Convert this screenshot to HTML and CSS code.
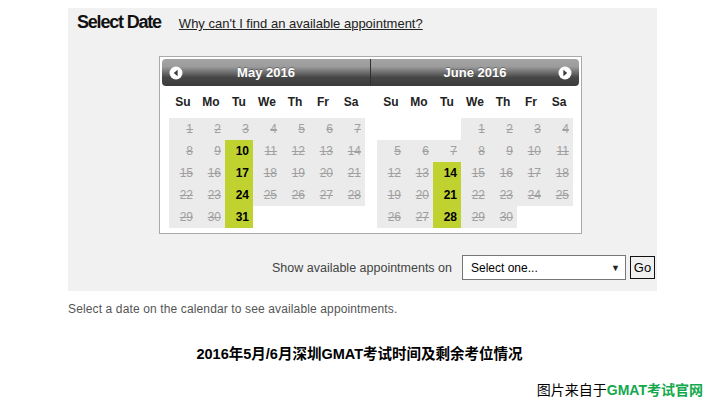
FILE: index.html
```html
<!DOCTYPE html>
<html lang="en">
<head>
    <meta charset="UTF-8">
    <title>Select Date</title>
    <link rel="stylesheet" href="styles.css">
</head>
<body>
    <div class="panel">
        <div class="panel-head">
            <h2>Select Date</h2>
            <a href="#" class="why-link">Why can't I find an available appointment?</a>
        </div>

        <!-- Calendrier deux mois -->
        <div class="calendar">
            <div class="cal-header">
                <div class="cal-title">
                    <svg class="nav-icon" width="14" height="14" viewBox="0 0 14 14"><circle cx="7" cy="7" r="6.5" fill="#fff"/><polygon points="8.6,3.8 4.8,7 8.6,10.2" fill="#3a3a3a"/></svg>
                    <span>May 2016</span>
                    <span></span>
                </div>
                <div class="cal-title second">
                    <span></span>
                    <span>June 2016</span>
                    <svg class="nav-icon" width="14" height="14" viewBox="0 0 14 14"><circle cx="7" cy="7" r="6.5" fill="#fff"/><polygon points="5.4,3.8 9.2,7 5.4,10.2" fill="#3a3a3a"/></svg>
                </div>
            </div>

            <div class="cal-months">
                <div class="month">
                    <div class="dow"><span>Su</span><span>Mo</span><span>Tu</span><span>We</span><span>Th</span><span>Fr</span><span>Sa</span></div>
                    <div class="days">
                        <span class="off">1</span><span class="off">2</span><span class="off">3</span><span class="off">4</span><span class="off">5</span><span class="off">6</span><span class="off">7</span>
                        <span class="off">8</span><span class="off">9</span><span class="on">10</span><span class="off">11</span><span class="off">12</span><span class="off">13</span><span class="off">14</span>
                        <span class="off">15</span><span class="off">16</span><span class="on">17</span><span class="off">18</span><span class="off">19</span><span class="off">20</span><span class="off">21</span>
                        <span class="off">22</span><span class="off">23</span><span class="on">24</span><span class="off">25</span><span class="off">26</span><span class="off">27</span><span class="off">28</span>
                        <span class="off">29</span><span class="off">30</span><span class="on">31</span><span></span><span></span><span></span><span></span>
                    </div>
                </div>
                <div class="month">
                    <div class="dow"><span>Su</span><span>Mo</span><span>Tu</span><span>We</span><span>Th</span><span>Fr</span><span>Sa</span></div>
                    <div class="days">
                        <span></span><span></span><span></span><span class="off">1</span><span class="off">2</span><span class="off">3</span><span class="off">4</span>
                        <span class="off">5</span><span class="off">6</span><span class="off">7</span><span class="off">8</span><span class="off">9</span><span class="off">10</span><span class="off">11</span>
                        <span class="off">12</span><span class="off">13</span><span class="on">14</span><span class="off">15</span><span class="off">16</span><span class="off">17</span><span class="off">18</span>
                        <span class="off">19</span><span class="off">20</span><span class="on">21</span><span class="off">22</span><span class="off">23</span><span class="off">24</span><span class="off">25</span>
                        <span class="off">26</span><span class="off">27</span><span class="on">28</span><span class="off">29</span><span class="off">30</span><span></span><span></span>
                    </div>
                </div>
            </div>
        </div>

        <div class="show-row">
            <span class="show-label">Show available appointments on</span>
            <div class="select-box"><span>Select one...</span><span class="caret">&#9660;</span></div>
            <button class="go-btn">Go</button>
        </div>
    </div>

    <p class="hint">Select a date on the calendar to see available appointments.</p>

    <h3 class="cn-title">2016年5月/6月深圳GMAT考试时间及剩余考位情况</h3>
    <p class="source">图片来自于<b>GMAT考试官网</b></p>
</body>
</html>
```

FILE: styles.css
```css
* {
    margin: 0;
    padding: 0;
    box-sizing: border-box;
}

body {
    font-family: 'Liberation Sans', Arial, sans-serif;
    color: #222;
    background: #fff;
}

.panel {
    margin: 8px 0 0 68px;
    width: 589px;
    height: 283px;
    padding-top: 4px;
    background: #f1f1f1;
}

.panel-head {
    display: flex;
    align-items: baseline;
    height: 20px;
    padding-left: 9px;
}

.panel-head h2 {
    font-size: 18px;
    line-height: 20px;
    font-weight: bold;
    letter-spacing: -1.2px;
    color: #111;
}

.why-link {
    margin-left: 18px;
    font-size: 13px;
    color: #222;
    text-decoration: underline;
}

/* calendrier */
.calendar {
    margin: 24px 0 0 91px;
    width: 423px;
    height: 178px;
    padding: 2px;
    background: #fff;
    border: 1px solid #aaa;
}

.cal-header {
    display: flex;
    height: 27px;
    border-radius: 4px;
    overflow: hidden;
    background: linear-gradient(#a4a4a4 0%, #9c9c9c 28%, #474747 68%, #3b3b3b 100%);
}

.cal-title {
    flex: 1;
    display: grid;
    grid-template-columns: 28px 1fr 28px;
    align-items: center;
    justify-items: center;
    color: #fff;
    font-size: 13px;
    font-weight: bold;
    text-shadow: 0 -1px 0 rgba(0,0,0,0.3);
}

.cal-title.second {
    border-left: 1px solid #2f2f2f;
}

.nav-icon {
    display: block;
}

.cal-months {
    display: flex;
    gap: 12px;
    padding: 0 5px 0 7px;
}

.dow,
.days {
    display: grid;
    grid-template-columns: repeat(7, 28px);
}

.dow {
    margin: 5px 0;
    height: 22px;
    line-height: 22px;
    text-align: center;
    font-size: 12px;
    font-weight: bold;
    color: #222;
}

.days {
    grid-auto-rows: 22px;
    font-size: 12px;
    line-height: 22px;
    text-align: right;
}

.days span {
    padding-right: 4px;
}

.days .off {
    background: #ebebeb;
    color: #a0a0a0;
    text-decoration: line-through;
}

.days .on {
    background: #bfd22f;
    color: #000;
    font-weight: bold;
}

/* ligne du bas */
.show-row {
    display: flex;
    align-items: center;
    justify-content: flex-end;
    margin-top: 21px;
    padding-right: 2px;
    height: 25px;
}

.show-label {
    font-size: 12.5px;
    color: #444;
    margin-right: 10px;
}

.select-box {
    display: flex;
    align-items: center;
    justify-content: space-between;
    width: 164px;
    height: 25px;
    padding: 0 5px 0 8px;
    background: #fff;
    border: 1px solid #777;
    font-size: 12px;
    color: #000;
}

.caret {
    font-size: 9px;
    color: #222;
}

.go-btn {
    margin-left: 4px;
    width: 25px;
    height: 23px;
    background: #f0f0f0;
    border: 1px solid #111;
    font-family: 'Liberation Sans', Arial, sans-serif;
    font-size: 13px;
    color: #000;
}

.hint {
    margin: 11px 0 0 68px;
    font-size: 12px;
    line-height: 14px;
    letter-spacing: 0.13px;
    color: #555;
}

.cn-title {
    margin-top: 28px;
    text-align: center;
    font-family: 'Liberation Sans', 'Noto Sans CJK SC', sans-serif;
    font-size: 14.5px;
    line-height: 20px;
    font-weight: bold;
    color: #000;
}

.source {
    margin-top: 17px;
    padding-right: 16px;
    text-align: right;
    font-family: 'Liberation Sans', 'Noto Sans CJK SC', sans-serif;
    font-size: 14px;
    line-height: 18px;
    color: #000;
}

.source b {
    color: #13a84c;
}
```
